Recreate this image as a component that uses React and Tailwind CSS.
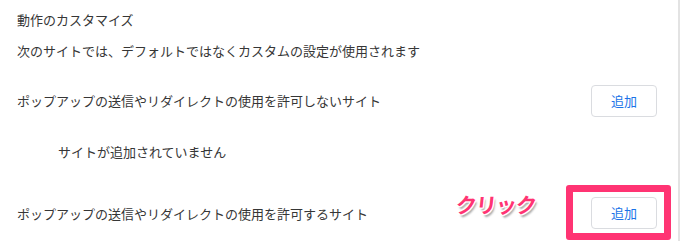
import React from "react";

const jp = { fontFamily: '"Noto Sans CJK JP", "Noto Sans", sans-serif' };

const AddButton = () => (
  <button
    type="button"
    className="h-[32px] w-[66px] rounded-[4px] border border-[#dadce0] bg-white text-[13px] text-[#1a73e8]"
  >
    追加
  </button>
);

export default function App() {
  return (
    <div style={jp} className="relative h-[241px] w-[680px] overflow-hidden bg-white text-[13px] text-[#363636]">
      <div className="h-full border-r-2 border-[#e3e3e3] pl-[17px] pr-[21px]">
        <div className="flex h-[38px] items-center pt-[1px]">動作のカスタマイズ</div>
        <div className="flex h-[24px] items-center pt-[1px]">次のサイトでは、デフォルトではなくカスタムの設定が使用されます</div>
        <div className="mt-[23px] flex h-[32px] items-center justify-between">
          <span>ポップアップの送信やリダイレクトの使用を許可しないサイト</span>
          <AddButton />
        </div>
        <div className="mt-[24px] flex h-[22px] items-center pl-[41px]">サイトが追加されていません</div>
        <div className="mt-[34px] flex h-[32px] items-center justify-between">
          <span className="pt-[2px]">ポップアップの送信やリダイレクトの使用を許可するサイト</span>
          <AddButton />
        </div>
      </div>

      {/* annotation overlay */}
      <div className="absolute left-[566px] top-[185px] h-[55px] w-[105px] rounded-[3px] border-[7px] border-[#ff3473]" />
      <div
        className="absolute left-[456px] top-[192px] -skew-x-6 text-[21px] font-bold leading-[24px] tracking-[-1px] text-[#ff3473]"
        style={{
          textShadow:
            "1px 1px 0 #fff, -1px -1px 0 #fff, 1px -1px 0 #fff, -1px 1px 0 #fff, 0 1px 0 #fff, 1px 0 0 #fff, 2px 3px 2px rgba(0,0,0,0.35)",
        }}
      >
        クリック
      </div>
    </div>
  );
}
